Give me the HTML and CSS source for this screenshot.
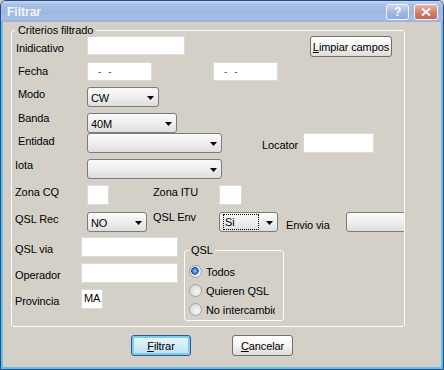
FILE: index.html
```html
<!DOCTYPE html>
<html>
<head>
<meta charset="utf-8">
<link rel="stylesheet" href="styles.css">
</head>
<body>
<div class="window">
  <div class="titlebar">
    <span class="title">Filtrar</span>
    <div class="tbtns">
      <span class="tbtn help">?</span>
      <span class="tbtn close"><svg width="10" height="8" viewBox="0 0 10 8"><path d="M1 0.5 L9 7.5 M9 0.5 L1 7.5" stroke="#fff" stroke-width="2" fill="none"/></svg></span>
    </div>
  </div>
  <div class="client">
    <div class="group main">
      <span class="legend">Criterios filtrado</span>

      <div class="row r1">
        <span class="lbl l-ind">Inidicativo</span>
        <span class="tb w98"></span>
        <span class="btn limpiar"><span><u>L</u>impiar campos</span></span>
      </div>

      <div class="row r2">
        <span class="lbl l-fecha">Fecha</span>
        <span class="tb w65 date"><span class="dash">-</span><span class="dash">-</span></span>
        <span class="tb w65 date date2"><span class="dash">-</span><span class="dash">-</span></span>
      </div>

      <div class="row r3">
        <span class="lbl l-modo">Modo</span>
        <span class="cb w72"><span class="cbt">CW</span><svg class="arr" width="7" height="4" viewBox="0 0 7 4"><path d="M0 0H7L3.5 4Z" fill="#000"/></svg></span>
      </div>

      <div class="row r4">
        <span class="lbl l-banda">Banda</span>
        <span class="cb w90"><span class="cbt">40M</span><svg class="arr" width="7" height="4" viewBox="0 0 7 4"><path d="M0 0H7L3.5 4Z" fill="#000"/></svg></span>
      </div>

      <div class="row r5">
        <span class="lbl l-ent">Entidad</span>
        <span class="cb w135"><span class="cbt"></span><svg class="arr" width="7" height="4" viewBox="0 0 7 4"><path d="M0 0H7L3.5 4Z" fill="#000"/></svg></span>
        <span class="lbl l-loc">Locator</span>
        <span class="tb w71 h20"></span>
      </div>

      <div class="row r6">
        <span class="lbl l-iota">Iota</span>
        <span class="cb w135"><span class="cbt"></span><svg class="arr" width="7" height="4" viewBox="0 0 7 4"><path d="M0 0H7L3.5 4Z" fill="#000"/></svg></span>
      </div>

      <div class="row r7">
        <span class="lbl l-cq">Zona CQ</span>
        <span class="tb w22 h20"></span>
        <span class="lbl l-itu">Zona ITU</span>
        <span class="tb w23 h20"></span>
      </div>

      <div class="row r8">
        <span class="lbl l-rec">QSL Rec</span>
        <span class="cb w60"><span class="cbt">NO</span><svg class="arr" width="7" height="4" viewBox="0 0 7 4"><path d="M0 0H7L3.5 4Z" fill="#000"/></svg></span>
        <span class="lbl l-env">QSL Env</span>
        <span class="cb w59"><span class="cbt focus">Si</span><svg class="arr" width="7" height="4" viewBox="0 0 7 4"><path d="M0 0H7L3.5 4Z" fill="#000"/></svg></span>
        <span class="lbl l-via">Envio via</span>
        <span class="cb w70"><span class="cbt"></span><svg class="arr" width="7" height="4" viewBox="0 0 7 4"><path d="M0 0H7L3.5 4Z" fill="#000"/></svg></span>
      </div>

      <div class="lower">
        <div class="leftcol">
          <div class="row r9">
            <span class="lbl l-low">QSL via</span>
            <span class="tb w97 h20"></span>
          </div>
          <div class="row r10">
            <span class="lbl l-low">Operador</span>
            <span class="tb w97 h20"></span>
          </div>
          <div class="row r11">
            <span class="lbl l-low">Provincia</span>
            <span class="tb w22 h20 prov">MA</span>
          </div>
        </div>
        <div class="group qsl">
          <span class="legend qleg">QSL</span>
          <div class="radrow"><span class="rad checked"></span><span class="rlbl">Todos</span></div>
          <div class="radrow"><span class="rad"></span><span class="rlbl">Quieren QSL</span></div>
          <div class="radrow"><span class="rad"></span><span class="rlbl">No intercambio</span></div>
        </div>
      </div>
    </div>

    <div class="actions">
      <span class="btn def w60"><span><u>F</u>iltrar</span></span>
      <span class="btn w61 cancel"><span><u>C</u>ancelar</span></span>
    </div>
  </div>
</div>
</body>
</html>
```

FILE: styles.css
```css
html, body {
  margin: 0;
  padding: 0;
  background: #d4d0c8;
}
body {
  font-family: "Liberation Sans", Arial, sans-serif;
  font-size: 11px;
  letter-spacing: -0.1px;
  color: #000;
}
.window {
  width: 444px;
  height: 370px;
  box-sizing: border-box;
  border: 1px solid #2a4a86;
  border-radius: 6px 6px 0 0;
  display: flex;
  flex-direction: column;
  background: #d4d0c8;
  overflow: hidden;
}
.titlebar {
  height: 21px;
  flex: none;
  display: flex;
  align-items: center;
  justify-content: space-between;
  padding: 0 5px 0 6px;
  background: linear-gradient(#c6d6f2, #a9bfe6 18%, #9fb7e0 55%, #a7bee6 85%, #98b0da);
}
.title {
  font-weight: bold;
  font-size: 12px;
  letter-spacing: 0;
  color: #f3f6fc;
  margin-top: 1px;
}
.tbtns {
  display: flex;
  gap: 5px;
  margin-top: 1px;
}
.tbtn {
  box-sizing: border-box;
  height: 16px;
  border: 1px solid #f2f5fb;
  border-radius: 3px;
  display: flex;
  align-items: center;
  justify-content: center;
}
.help {
  width: 23px;
  background: linear-gradient(#c7d5f2, #a3b9e4 50%, #8ea9dc);
  color: #fff;
  font-weight: bold;
  font-size: 12px;
}
.close {
  width: 24px;
  background: linear-gradient(#eab3a6, #d6806c 50%, #c8614c);
}
.client {
  flex: 1;
  border: solid #5cc1ee;
  border-width: 0 2px 2px 2px;
  display: flex;
  flex-direction: column;
  padding-top: 8px;
}
.group {
  position: relative;
  box-sizing: border-box;
  border: 1px solid #fbfbfb;
  border-radius: 3px;
}
.main {
  margin-left: 8px;
  width: 394px;
  height: 297px;
  padding-top: 5px;
}
.legend {
  position: absolute;
  top: -8px;
  left: 3px;
  padding: 0 3px 0 3px;
  background: #d4d0c8;
  line-height: 14px;
}
.row {
  display: flex;
  align-items: flex-start;
  flex: none;
}
.r1 { height: 26px; }
.r2 { height: 25px; }
.r3 { height: 26px; }
.r4 { height: 20px; }
.r5 { height: 26px; }
.r6 { height: 26px; }
.r7 { height: 27px; }
.r8 { height: 25px; overflow: hidden; }
.r9 { height: 26px; }
.r10 { height: 26px; }
.r11 { height: 20px; }

.lbl {
  flex: none;
  line-height: 14px;
  white-space: nowrap;
}
.l-ind { margin-left: 4px; width: 71px; margin-top: 5px; }
.l-fecha { margin-left: 6px; width: 69px; margin-top: 2px; }
.l-modo { margin-left: 6px; width: 69px; margin-top: 0; }
.l-banda { margin-left: 6px; width: 69px; margin-top: -2px; }
.l-ent { margin-left: 6px; width: 69px; margin-top: 1px; }
.l-loc { margin-left: 40px; width: 41px; margin-top: 5px; }
.l-iota { margin-left: 3px; width: 72px; margin-top: -1px; }
.l-cq { margin-left: 3px; width: 72px; margin-top: 0; }
.l-itu { margin-left: 44px; width: 66px; margin-top: 0; }
.l-rec { margin-left: 3px; width: 72px; margin-top: 0; }
.l-env { margin-left: 6px; width: 66px; margin-top: -2px; }
.l-via { margin-left: 8px; width: 60px; margin-top: 6px; }
.l-low { margin-left: 3px; width: 66px; margin-top: 5px; }

.tb {
  flex: none;
  box-sizing: border-box;
  height: 19px;
  background: #fff;
  border: 1px solid #dadada;
}
.h20 { height: 20px; }
.w22 { width: 22px; }
.w23 { width: 23px; }
.w59 { width: 59px; }
.w60 { width: 60px; }
.w61 { width: 61px; }
.w65 { width: 65px; }
.w70 { width: 70px; }
.w71 { width: 71px; }
.w72 { width: 72px; }
.w90 { width: 90px; }
.w97 { width: 97px; }
.w98 { width: 98px; }
.w135 { width: 135px; }

.date {
  display: flex;
  align-items: center;
  padding-left: 10px;
  gap: 7px;
  color: #555;
  font-size: 10px;
}
.date2 { margin-left: 61px; }
.prov {
  padding: 1px 0 0 2px;
  line-height: 14px;
}

.cb {
  flex: none;
  box-sizing: border-box;
  height: 20px;
  border: 1px solid #7c7c7c;
  border-radius: 3px;
  background: linear-gradient(#fbfbfb, #f0f0f0 45%, #dedede);
  display: flex;
  align-items: center;
  padding-left: 3px;
}
.cbt {
  line-height: 14px;
  margin-top: 1px;
}
.arr {
  margin-left: auto;
  margin-right: 4px;
  margin-top: 2px;
  flex: none;
}
.focus {
  width: 36px;
  height: 16px;
  box-sizing: border-box;
  outline: 1px dotted #000;
  outline-offset: -1px;
  padding-left: 2px;
  margin-top: 0;
  line-height: 16px;
}

.btn {
  flex: none;
  box-sizing: border-box;
  height: 21px;
  border: 1px solid #6f6f6f;
  border-radius: 3px;
  background: linear-gradient(#ffffff, #f4f4f2 50%, #dedcd6);
  display: flex;
  align-items: center;
  justify-content: center;
  line-height: 14px;
  white-space: nowrap;
}
.limpiar {
  width: 82px;
  margin-left: 125px;
}
.def {
  border-color: #2a5a95;
  box-shadow: inset 0 0 0 2px #79ccf4;
  background: linear-gradient(#eef8fe, #cde9f8 60%, #bfe2f6);
}
.cancel { margin-left: 41px; }

.lower {
  display: flex;
  align-items: flex-start;
}
.leftcol {
  width: 172px;
  flex: none;
  display: flex;
  flex-direction: column;
}
.qsl {
  width: 100px;
  height: 71px;
  margin-top: 13px;
  padding-top: 11px;
  flex: none;
}
.qleg {
  left: 4px;
  padding: 0 2px;
}
.radrow {
  height: 19px;
  display: flex;
  align-items: center;
  overflow: hidden;
  width: 90px;
  white-space: nowrap;
}
.rad {
  flex: none;
  width: 13px;
  height: 13px;
  box-sizing: border-box;
  border-radius: 50%;
  border: 1px solid #9aa3ad;
  margin-left: 4px;
  background: radial-gradient(circle at 65% 65%, #f6f6f6, #e0e0e0 60%, #cfcfcf);
}
.checked {
  background:
    radial-gradient(circle at 45% 45%, #8fd0fb 0, #2d7ad8 2.5px, #1a4fa8 3.5px, rgba(0,0,0,0) 4px),
    radial-gradient(circle at 65% 65%, #f6f6f6, #e0e0e0 60%, #cfcfcf);
}
.rlbl {
  margin-left: 4px;
  line-height: 14px;
}

.actions {
  display: flex;
  margin-top: 8px;
  padding-left: 128px;
}
```
